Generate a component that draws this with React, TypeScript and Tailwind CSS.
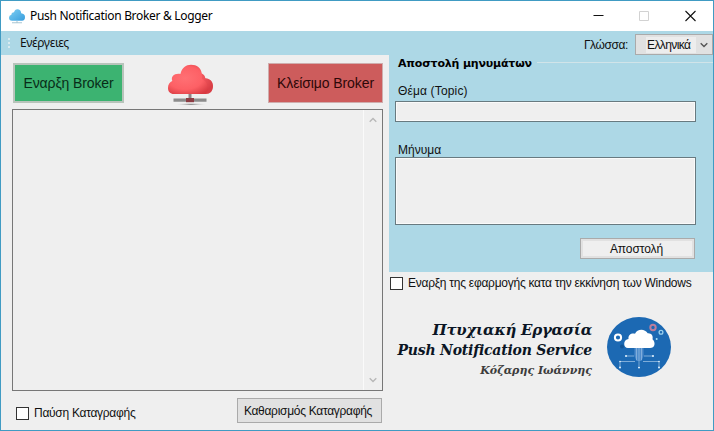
import React from "react";

const sans = "font-['Liberation_Sans',Arial,sans-serif]";
const segoe = "font-['Noto_Sans','Segoe_UI',sans-serif]";

function TitleCloud() {
  return (
    <svg width="16" height="15" viewBox="0 0 16 14" preserveAspectRatio="none">
      <defs>
        <linearGradient id="blueCloud" x1="0" x2="1" y2="1">
          <stop stopColor="#7fd0f3" />
          <stop offset="1" stopColor="#379ddd" />
        </linearGradient>
      </defs>
      <path d="M3 11Q0 11 0 8.2Q0 6 2.4 5.4Q2.4 3 5 3Q6-.3 9 .2Q12 .5 12.2 4Q16 4.4 16 7.5Q16 11 13 11Z" fill="url(#blueCloud)" />
      <path d="M8 11v2M3 12.8h10" stroke="#a9c6d3" />
    </svg>
  );
}

function StatusCloud() {
  return (
    <svg width="46" height="42" viewBox="0 0 46 42">
      <defs>
        <radialGradient id="redCloud" cx=".38" cy=".45" r=".65">
          <stop stopColor="#ff7074" />
          <stop offset=".6" stopColor="#fd6065" />
          <stop offset="1" stopColor="#d93b42" />
        </radialGradient>
        <radialGradient id="floorShade">
          <stop stopColor="#777" />
          <stop offset="1" stopColor="#eee" stopOpacity="0" />
        </radialGradient>
      </defs>
      <ellipse cx="23" cy="40.3" rx="16" ry="1.4" fill="url(#floorShade)" />
      <path d="M20.5 29h3v5h-3z" fill="#8d8587" />
      <path d="M5.5 34.5h33v3.3h-33z" fill="#8c8c8c" />
      <path d="M18 34h8v4.2h-8z" fill="#8d3c43" />
      <path d="M6 30C2 30 0 27.5 0 24C0 20.5 1.8 18 4.3 17C2.5 12.5 6.5 9 12.4 10C14 3.5 18 .8 23 .8C29 .8 33 4 33.8 9.5C36 10.8 37 12.2 37.3 14.2C42 14.4 45 17.7 45 22C45 27 42 30 38 30Z" fill="url(#redCloud)" />
      <path d="M33.8 9.5C36 10.8 37 12.2 37.3 14.2C42 14.4 45 17.7 45 22C45 27 42 30 38 30C42 24 39 17 34 15Z" fill="#d9464d" opacity=".35" />
    </svg>
  );
}

function ServiceLogo() {
  return (
    <svg width="64" height="60" viewBox="0 0 64 60">
      <ellipse cx="32" cy="30" rx="32" ry="30" fill="#1c69b3" />
      <circle cx="15" cy="29.5" r="2" fill="#135596" />
      <circle cx="11" cy="20.5" r="3.1" fill="none" stroke="#fff" strokeWidth="2" />
      <circle cx="46" cy="10.5" r="2.7" fill="none" stroke="#bb7d9d" strokeWidth="2" />
      <circle cx="54" cy="15.3" r="1.9" fill="none" stroke="#9bd1ee" strokeWidth="1.3" />
      <circle cx="49.7" cy="22" r="1" fill="#a9def5" />
      <path d="M27.5 29h9v10l-2 5h-5l-2-5z" fill="#4e8bcb" />
      <path d="M29.5 31v12M32 31v18M34.5 31v12" stroke="#8db7df" strokeWidth=".8" />
      <path d="M19 39h8M37 39h9M13 50v-5.5h15M36 44.5h16V50" fill="none" stroke="#a9cae8" strokeWidth=".7" />
      <g fill="#e6f4ff"><circle cx="19" cy="39" r="1" /><circle cx="46" cy="39" r="1" /><circle cx="13" cy="44.5" r=".8" /><circle cx="52" cy="44.5" r=".8" /><circle cx="13" cy="50.5" r="1" /><circle cx="32" cy="50.5" r="1" /><circle cx="52" cy="50.5" r="1" /></g>
      <path d="M21 31C18.5 31 17.2 29.3 17.2 27C17.2 24 19 22.5 21.5 22C21 18 24 16 28 16.7C30 11.6 38 11.2 40.7 16.3C44.5 16 46.5 19 45.5 22.2C49 25.5 48 31 43 31Z" fill="#fff" />
    </svg>
  );
}

function Chevron({ up = false, className = "" }: { up?: boolean; className?: string }) {
  return (
    <svg width="8" height="6" viewBox="0 0 8 6" className={`shrink-0 ${className}`}>
      <path d={up ? "M.7 4.8L4 1.5l3.3 3.3" : "M.7 1.2L4 4.5l3.3-3.3"} fill="none" stroke="currentColor" strokeWidth="1.4" />
    </svg>
  );
}

function CheckBox() {
  return <span className="size-[13px] shrink-0 border border-[#333] bg-white" />;
}

export default function App() {
  return (
    <div className={`flex h-[431px] w-[714px] flex-col overflow-hidden border border-[#409bc3] bg-[#efefef] text-[12px] leading-[16px] whitespace-nowrap text-[#111] ${sans}`}>
      <header className={`flex h-[30px] shrink-0 items-center bg-white pl-2 text-black ${segoe}`}>
        <TitleCloud />
        <h1 className="ml-[5px] text-[12px] tracking-[-0.31px]">Push Notification Broker &amp; Logger</h1>
        <svg width="103" height="12" viewBox="0 0 103 12" className="mr-[17px] ml-auto" fill="none">
          <path d="M.5 5.5h10M92.5 1l10 10m0-10l-10 10" stroke="#111" strokeWidth="1.1" />
          <path d="M46.5 1.5h9v9h-9z" stroke="#d2d2d2" />
        </svg>
      </header>

      <nav className="flex h-6 shrink-0 items-center bg-[#add8e6] pl-[7px]">
        <span className="grid gap-[2px]"><i className="size-[2px] bg-[#d8eaf0]" /><i className="size-[2px] bg-[#d8eaf0]" /><i className="size-[2px] bg-[#d8eaf0]" /></span>
        <span className={`ml-[10px] text-[12px] tracking-[-0.4px] ${segoe}`}>Ενέργειες</span>
        <span className="mt-[4px] ml-auto text-[12px] tracking-[-0.4px]">Γλώσσα:</span>
        <button className="mt-[3px] ml-[7px] flex h-[21px] w-[78px] items-center border border-[#aaa] bg-[#e1e1e1] pl-[10px]">
          <span className="w-[50px] bg-[#ededed] pl-px text-left text-[12px] tracking-[-0.6px]">Ελληνικά</span>
          <Chevron className="ml-[4px] text-[#555]" />
        </button>
      </nav>

      <main className="flex min-h-0 flex-1">
        <section className="w-[388px] shrink-0 pt-2 pl-[11px]">
          <div className="flex h-[46px] w-[371px] items-start pl-px">
            <button className="h-10 w-[111px] border-2 border-[#b8c4bb] bg-[#3cb371] text-[14px] tracking-[-0.12px] text-[#082c18]">Εναρξη Broker</button>
            <span className="mt-px ml-[44px]"><StatusCloud /></span>
            <button className="ml-auto h-10 w-[115px] border border-[#cfadad] bg-[#cd5c5c] text-[14px] tracking-[-0.1px] text-[#2d0808]">Κλείσιμο Broker</button>
          </div>
          <div className="flex h-[282px] w-[371px] justify-end border border-[#777] bg-[#efefef]">
            <div className="flex w-[19px] flex-col items-center justify-between border-l border-[#fafafa] py-[7px] text-[#b8b8b8]">
              <Chevron up /><Chevron />
            </div>
          </div>
          <div className="flex h-[39px] w-[371px] items-start pt-[7px] pl-1">
            <label className="mt-[7px] flex items-center gap-[5px]"><CheckBox /><span className="tracking-[-0.28px]">Παύση Καταγραφής</span></label>
            <button className="mr-px ml-auto h-[25px] w-[145px] border border-[#aaa] bg-[#e1e1e1] pr-[3px] tracking-[-0.29px]">Καθαρισμός Καταγραφής</button>
          </div>
        </section>

        <section className="flex min-w-0 flex-1 flex-col">
          <div className="h-[217px] shrink-0 bg-[#add8e6] pl-[6px]">
            <div className="flex h-[17px] items-start overflow-hidden pl-[3px]">
              <h2 className="w-[135px] pt-px font-['DejaVu_Sans',sans-serif] text-[11px] font-bold tracking-[-0.18px] text-black">Αποστολή μηνυμάτων</h2>
              <span className="mt-[7px] ml-1 h-px flex-1 bg-[#d1e4e9]" />
            </div>
            <label className="mt-[11px] block pl-[3px] tracking-[0.15px]">Θέμα (Topic)</label>
            <div className="mt-[2px] h-[21px] w-[301px] border border-[#687a80] bg-[#efefef] shadow-[inset_0_0_0_1px_#fafafa]" />
            <label className="mt-[20px] block pl-[3px]">Μήνυμα</label>
            <div className="-mt-px h-[68px] w-[301px] border border-[#687a80] bg-[#efefef] shadow-[inset_0_0_0_1px_#fafafa]" />
            <button className="mt-[13px] ml-[185px] block h-[21px] w-[115px] border border-[#aaa] bg-[#efefef] pt-px pr-[2px] tracking-[-0.1px] shadow-[inset_0_0_0_2px_#e1e1e1]">Αποστολή</button>
          </div>
          <label className="mt-[3px] flex items-center gap-[5px] pl-px"><CheckBox /><span className="text-[12px] tracking-[-0.26px]">Εναρξη της εφαρμογής κατα την εκκίνηση των Windows</span></label>
          <div className="mt-[26px] flex items-start justify-end pr-[42px]">
            <div className="mr-[15px] text-right font-['DejaVu_Serif',serif] font-bold text-[#0b1524] italic">
              <p className="mt-[3px] text-[15px] leading-[20px] tracking-[-0.25px]">Πτυχιακή Εργασία</p>
              <p className="text-[14px] leading-[20px] tracking-[-0.22px]">Push Notification Service</p>
              <p className="mt-px text-[11px] leading-[20px] text-[#3c3c3c]">Κόζαρης Ιωάννης</p>
            </div>
            <ServiceLogo />
          </div>
        </section>
      </main>
    </div>
  );
}
